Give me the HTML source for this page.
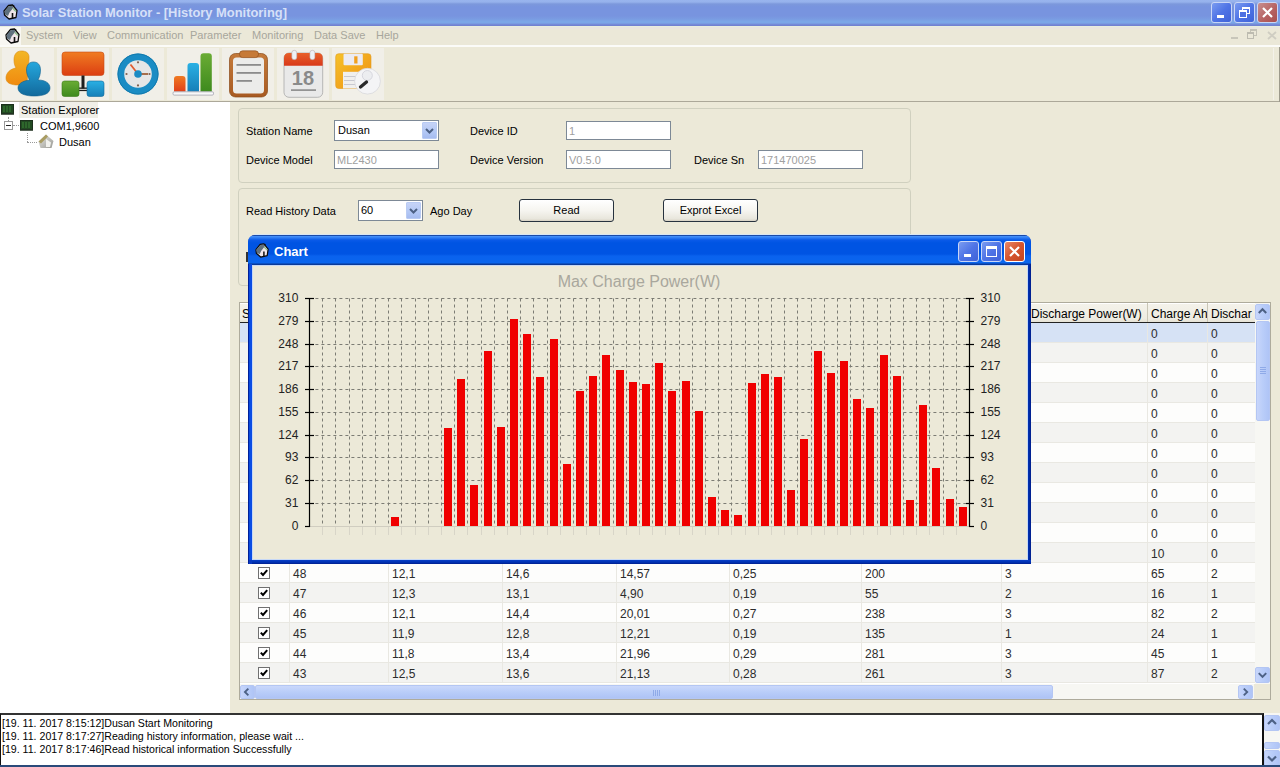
<!DOCTYPE html><html><head><meta charset="utf-8"><style>
*{margin:0;padding:0;box-sizing:border-box}
html,body{width:1280px;height:767px;overflow:hidden;background:#ece9d8;font-family:"Liberation Sans",sans-serif;font-size:11px;color:#000}
.a{position:absolute}
.t{position:absolute;white-space:nowrap;line-height:13px}
.tb{position:absolute;background:#fff;border:1px solid #7d8996}
.dis{color:#a0a0a0}
.btn{position:absolute;border:1px solid #27323e;border-radius:3px;background:linear-gradient(#fff 0%,#f6f5f0 50%,#e8e6dc 90%,#d6d0c2 100%);text-align:center;line-height:20px;font-size:11px}
.ddb{position:absolute;width:15px;border-radius:1px;background:linear-gradient(#c6d3f7,#b3c8f5 60%,#a6bcf0);border:1px solid #b9cbf3}
.sb{position:absolute;background:linear-gradient(90deg,#c8d6fb,#b9cdf9 50%,#afc4f6);border:1px solid #b4c6f3;border-radius:2px}
.gc{position:absolute;top:0;height:20px;border-right:1px solid #ecebe6}
</style></head><body>
<div class="a" style="left:0;top:0;width:1280px;height:26px;background:linear-gradient(#98b4ee 0px,#96b2ec 2px,#7c98dc 4px,#7894df 7px,#7894df 16px,#7a9ce2 19px,#7aa8e8 22px,#7aa4e6 23px,#7282d2 25px,#7080d0 26px)"></div>
<div class="a" style="left:0;top:26px;width:1280px;height:1px;background:#e6eede"></div>
<div class="a" style="left:0;top:27px;width:1280px;height:2px;background:#e9e6de"></div>
<svg class="a" style="left:3px;top:4px" width="16" height="16" viewBox="0 0 16 16"><path d="M1 7 L5.5 1.5 L9.5 1 L14 6.5 L13 13.5 L6 15 L1.5 11 Z" fill="#efe6ea" stroke="#0a0a0a" stroke-width="1.3" stroke-linejoin="round"/><path d="M1.6 7 L5.7 2.2 L9.3 1.8 L10.5 3.5 L6.5 8.5 L5 12 L2 10.5 Z" fill="#5f707e"/><path d="M10 3.5 L13.2 6.8 L12.5 8 L9.5 5 Z" fill="#8fbf8f"/><path d="M9.5 9 L9.5 14.5" stroke="#111" stroke-width="1.6"/><circle cx="10.5" cy="1.8" r="0.9" fill="#111"/></svg>
<div class="t" style="left:22px;top:6px;font-size:12.9px;font-weight:bold;color:#d6e0f8;letter-spacing:0px">Solar Station Monitor - [History Monitoring]</div>
<div class="a" style="left:1211px;top:2px;width:21px;height:21px;border:1px solid #c9d6f6;border-radius:3px;background:linear-gradient(135deg,#7a9bf0,#4f74e6 50%,#3f62d8)"><div class="a" style="left:5px;top:12px;width:7px;height:3px;background:#fff"></div></div>
<div class="a" style="left:1234px;top:2px;width:21px;height:21px;border:1px solid #c9d6f6;border-radius:3px;background:linear-gradient(135deg,#7a9bf0,#4f74e6 50%,#3f62d8)"><div class="a" style="left:7px;top:4px;width:8px;height:7px;border:1px solid #fff;border-top-width:2px"></div><div class="a" style="left:4px;top:7px;width:8px;height:8px;border:1px solid #fff;border-top-width:2px;background:#4d70e2"></div></div>
<div class="a" style="left:1257px;top:2px;width:21px;height:21px;border:1px solid #c9d6f6;border-radius:3px;background:linear-gradient(135deg,#c88f8f,#b56060 60%,#a85050)"><svg class="a" style="left:0;top:0" width="19" height="19"><path d="M5 5 L14 14 M14 5 L5 14" stroke="#fff" stroke-width="2.2"/></svg></div>
<div class="a" style="left:0;top:29px;width:1280px;height:16px;background:#ebe8d8"></div>
<div class="a" style="left:0;top:45px;width:1280px;height:2px;background:#fbfbf8"></div>
<div class="a" style="left:0;top:27px;width:21px;height:18px;background:#f8f7f2"></div>
<svg class="a" style="left:5px;top:28px" width="16" height="16" viewBox="0 0 16 16"><path d="M1 7 L5.5 1.5 L9.5 1 L14 6.5 L13 13.5 L6 15 L1.5 11 Z" fill="#efe6ea" stroke="#0a0a0a" stroke-width="1.3" stroke-linejoin="round"/><path d="M1.6 7 L5.7 2.2 L9.3 1.8 L10.5 3.5 L6.5 8.5 L5 12 L2 10.5 Z" fill="#5f707e"/><path d="M10 3.5 L13.2 6.8 L12.5 8 L9.5 5 Z" fill="#8fbf8f"/><path d="M9.5 9 L9.5 14.5" stroke="#111" stroke-width="1.6"/><circle cx="10.5" cy="1.8" r="0.9" fill="#111"/></svg>
<div class="t" style="left:26px;top:29px;font-size:11px;color:#a7a69c">System</div>
<div class="t" style="left:73px;top:29px;font-size:11px;color:#a7a69c">View</div>
<div class="t" style="left:107px;top:29px;font-size:11px;color:#a7a69c">Communication</div>
<div class="t" style="left:190px;top:29px;font-size:11px;color:#a7a69c">Parameter</div>
<div class="t" style="left:252px;top:29px;font-size:11px;color:#a7a69c">Monitoring</div>
<div class="t" style="left:314px;top:29px;font-size:11px;color:#a7a69c">Data Save</div>
<div class="t" style="left:376px;top:29px;font-size:11px;color:#a7a69c">Help</div>
<div class="a" style="left:1231px;top:37px;width:7px;height:2px;background:#c8c6ba"></div>
<div class="a" style="left:1250px;top:29px;width:7px;height:7px;border:1px solid #c4c2b6;border-top-width:2px"></div>
<div class="a" style="left:1247px;top:32px;width:7px;height:7px;border:1px solid #bdbbb0;border-top-width:2px;background:#ebe8d8"></div>
<svg class="a" style="left:1267px;top:31px" width="10" height="9"><path d="M1 1 L9 8 M9 1 L1 8" stroke="#cfcdc2" stroke-width="1.8"/></svg>
<div class="a" style="left:0;top:47px;width:1280px;height:54px;background:#ece9d8"></div>
<div class="a" style="left:0;top:101px;width:1280px;height:1px;background:#aca899"></div>
<div class="a" style="left:1279px;top:47px;width:1px;height:55px;background:#9d9a8c"></div>
<div class="a" style="left:1273px;top:48px;width:1px;height:52px;background:#f4f2ea"></div>
<div class="a" style="left:2px;top:48px;width:52px;height:52px;background:#f1efe8"></div>
<div class="a" style="left:57px;top:48px;width:52px;height:52px;background:#f1efe8"></div>
<div class="a" style="left:112px;top:48px;width:52px;height:52px;background:#f1efe8"></div>
<div class="a" style="left:167px;top:48px;width:52px;height:52px;background:#f1efe8"></div>
<div class="a" style="left:222px;top:48px;width:52px;height:52px;background:#f1efe8"></div>
<div class="a" style="left:277px;top:48px;width:52px;height:52px;background:#f1efe8"></div>
<div class="a" style="left:332px;top:48px;width:52px;height:52px;background:#f1efe8"></div>
<svg class="a" style="left:0;top:0" width="400" height="102" viewBox="0 0 400 102">
<defs>
<linearGradient id="gor" x1="0" y1="0" x2="0" y2="1"><stop offset="0" stop-color="#f3b624"/><stop offset="1" stop-color="#f08a10"/></linearGradient>
<linearGradient id="gbl" x1="0" y1="0" x2="0" y2="1"><stop offset="0" stop-color="#25a7dd"/><stop offset="1" stop-color="#12699c"/></linearGradient>
<linearGradient id="gnet" x1="0" y1="0" x2="0" y2="1"><stop offset="0" stop-color="#f07c22"/><stop offset="1" stop-color="#dc3e12"/></linearGradient>
<linearGradient id="ggr" x1="0" y1="0" x2="0" y2="1"><stop offset="0" stop-color="#6aac34"/><stop offset="1" stop-color="#3e8a1e"/></linearGradient>
<linearGradient id="gbx" x1="0" y1="0" x2="0" y2="1"><stop offset="0" stop-color="#2ab0e4"/><stop offset="1" stop-color="#167fb8"/></linearGradient>
<linearGradient id="gob" x1="0" y1="0" x2="0" y2="1"><stop offset="0" stop-color="#f07a22"/><stop offset="1" stop-color="#e0401a"/></linearGradient>
<linearGradient id="gcb" x1="0" y1="0" x2="0" y2="1"><stop offset="0" stop-color="#c47a3a"/><stop offset="1" stop-color="#a85a22"/></linearGradient>
<linearGradient id="gcal" x1="0" y1="0" x2="0" y2="1"><stop offset="0" stop-color="#e8602a"/><stop offset="1" stop-color="#d8381a"/></linearGradient>
<linearGradient id="gfl" x1="0" y1="0" x2="1" y2="1"><stop offset="0" stop-color="#f6c22a"/><stop offset="1" stop-color="#ee8e12"/></linearGradient>
</defs>
<!-- users -->
<path d="M21.5 51 C16 51 14 55 14 60 C14 64 15 66 16 68 C10 69 6 73 6 78 C6 83 11 85 18 85 L27 85 L28 66 C29 62 29 59 29 57 C29 53 26 51 21.5 51 Z" fill="url(#gor)" stroke="#d88a10" stroke-width="0.6"/>
<path d="M33.5 62 C29 62 26.5 65 26.5 70 C26.5 74 28 77 29.5 80 C22 81 18 84 18 88 C18 94 26 96 34 96 C43 96 50 94 50 88 C50 83 45 80 38 80 C39.5 77 40.5 74 40.5 70 C40.5 65 38 62 33.5 62 Z" fill="url(#gbl)" stroke="#0f5f8e" stroke-width="0.6"/>
<!-- network -->
<rect x="62" y="52" width="42" height="23.5" rx="3" fill="url(#gnet)" stroke="#c84a18" stroke-width="0.6"/>
<rect x="81.5" y="75.5" width="3" height="13" fill="#1e1e1e"/>
<rect x="78" y="87.5" width="10" height="1.3" fill="#1e1e1e"/><rect x="78" y="89.8" width="10" height="1.3" fill="#1e1e1e"/>
<rect x="62" y="81" width="17" height="15.5" rx="2.5" fill="url(#ggr)" stroke="#3a7a1a" stroke-width="0.6"/>
<rect x="87" y="81" width="17" height="15.5" rx="2.5" fill="url(#gbx)" stroke="#136a9a" stroke-width="0.6"/>
<!-- clock -->
<circle cx="138" cy="74" r="20.5" fill="#1a8cc4"/>
<circle cx="138" cy="74" r="20" fill="none" stroke="#137aad" stroke-width="1"/>
<circle cx="138" cy="74" r="13.8" fill="#e6e6e6"/>
<path d="M138 74 L130.5 64.5" stroke="#e05a30" stroke-width="1.8"/>
<path d="M138 74 L148 74" stroke="#a0603a" stroke-width="1.8"/>
<circle cx="138" cy="74" r="3.8" fill="#1c8bc4"/>
<circle cx="138" cy="62.3" r="1.1" fill="#806050"/><circle cx="138" cy="85.4" r="1.1" fill="#806050"/>
<circle cx="126.5" cy="74" r="1.1" fill="#806050"/><circle cx="149.5" cy="74" r="1.1" fill="#806050"/>
<!-- bars -->
<path d="M174 91.5 L174 79 Q174 76 177 76 L182.5 76 Q185.5 76 185.5 79 L185.5 91.5 Z" fill="url(#gob)"/>
<path d="M187.5 91.5 L187.5 66 Q187.5 63 190.5 63 L196 63 Q199 63 199 66 L199 91.5 Z" fill="url(#gbx)"/>
<path d="M200.5 91.5 L200.5 56.5 Q200.5 53.3 203.5 53.3 L208.8 53.3 Q211.8 53.3 211.8 56.5 L211.8 91.5 Z" fill="url(#ggr)"/>
<rect x="173" y="91.8" width="40.5" height="3.3" rx="1.2" fill="#f8f8f8" stroke="#9a9aa8" stroke-width="0.7"/>
<!-- clipboard -->
<rect x="229.5" y="53.5" width="38" height="43.5" rx="6" fill="url(#gcb)" stroke="#8a4a1a" stroke-width="0.7"/>
<rect x="233" y="57.5" width="31" height="36" rx="3.5" fill="#ececea"/>
<rect x="239.5" y="50.8" width="19" height="6.8" rx="3.2" fill="#c67a38" stroke="#8a4a1a" stroke-width="0.6"/>
<rect x="236.5" y="64" width="24.5" height="1.8" fill="#8c8c8c"/>
<rect x="236.5" y="72" width="24.5" height="1.8" fill="#8c8c8c"/>
<rect x="236.5" y="80" width="15.5" height="1.8" fill="#8c8c8c"/>
<!-- calendar -->
<rect x="284" y="53" width="38.7" height="44.3" rx="5" fill="#e9e9e9" stroke="#a8a8a8" stroke-width="0.8"/>
<path d="M284 65.8 L284 58 Q284 53 289 53 L317.7 53 Q322.7 53 322.7 58 L322.7 65.8 Z" fill="url(#gcal)"/>
<rect x="291.8" y="50.3" width="5" height="9.4" rx="2.5" fill="#eef0f6" stroke="#b0a0a0" stroke-width="0.5"/>
<rect x="309.9" y="50.3" width="5" height="9.4" rx="2.5" fill="#eef0f6" stroke="#b0a0a0" stroke-width="0.5"/>
<text x="302.9" y="85.1" text-anchor="middle" font-family="Liberation Sans" font-weight="bold" font-size="20" fill="#8a8a8a">18</text>
<rect x="291" y="89.3" width="25" height="1.6" fill="#8a8a8a"/>
<!-- floppy -->
<rect x="335.7" y="53.7" width="35.3" height="34.8" rx="3" fill="url(#gfl)" stroke="#e09a20" stroke-width="0.6"/>
<rect x="343.5" y="53.7" width="19.3" height="11.6" rx="1" fill="#ecebf2"/>
<rect x="354.2" y="56.3" width="3.3" height="7.2" fill="#f0a020"/>
<rect x="343" y="71.8" width="20" height="16.7" fill="#f0efee"/>
<rect x="344" y="76" width="14" height="1" fill="#c8c8d0"/><rect x="344" y="80" width="14" height="1" fill="#c8c8d0"/><rect x="344" y="84" width="14" height="1" fill="#c8c8d0"/>
<circle cx="367.5" cy="81.2" r="12.9" fill="#f4f4f6" stroke="#d8d8dc" stroke-width="0.8"/>
<circle cx="367.3" cy="75.5" r="5" fill="#ecedf0" stroke="#cfcfd8" stroke-width="0.8"/>
<path d="M360.5 87 L366.5 82" stroke="#2a2a2a" stroke-width="3.3" stroke-linecap="round"/>
</svg>
<div class="a" style="left:0;top:102px;width:230px;height:612px;background:#fff"></div>
<svg class="a" style="left:1px;top:104px" width="13" height="11" viewBox="0 0 13 11"><rect x="0" y="0" width="13" height="10.5" fill="#1c301c"/><rect x="1" y="1" width="11" height="8" fill="#224a22"/><path d="M2 3 H11 M2 5 H11 M2 7 H11" stroke="#3f8a3a" stroke-width="0.9" stroke-dasharray="2,1"/><rect x="0" y="9" width="13" height="1.5" fill="#223322"/></svg>
<div class="a" style="left:19px;top:102px;width:79px;height:16px;background:#f0efe8"></div>
<div class="t" style="left:21px;top:104px;font-size:11px">Station Explorer</div>
<div class="a" style="left:8px;top:117px;width:0;height:4px;border-left:1px dotted #999"></div>
<div class="a" style="left:4px;top:121px;width:9px;height:9px;border:1px solid #999;background:#fff"><div class="a" style="left:1px;top:3px;width:5px;height:1px;background:#222"></div></div>
<div class="a" style="left:13px;top:125px;width:6px;height:0;border-top:1px dotted #999"></div>
<svg class="a" style="left:20px;top:120px" width="13" height="11" viewBox="0 0 13 11"><rect x="0" y="0" width="13" height="10.5" fill="#1c301c"/><rect x="1" y="1" width="11" height="8" fill="#224a22"/><path d="M2 3 H11 M2 5 H11 M2 7 H11" stroke="#3f8a3a" stroke-width="0.9" stroke-dasharray="2,1"/><rect x="0" y="9" width="13" height="1.5" fill="#223322"/></svg>
<div class="t" style="left:40px;top:120px;font-size:11px">COM1,9600</div>
<div class="a" style="left:27px;top:133px;width:0;height:9px;border-left:1px dotted #999"></div>
<div class="a" style="left:27px;top:142px;width:10px;height:0;border-top:1px dotted #999"></div>
<svg class="a" style="left:37px;top:133px" width="18" height="16" viewBox="0 0 18 16"><defs><linearGradient id="hs" x1="0" y1="0" x2="1" y2="1"><stop offset="0" stop-color="#e8e8e4"/><stop offset="1" stop-color="#9a9a94"/></linearGradient></defs><path d="M1.5 8.5 L9 1.5 L16.5 8 L14.5 15 L3.5 15 Z" fill="url(#hs)"/><path d="M1.5 8.5 L9 1.5 L11 3.5 L4 10.5 Z" fill="#a99c62"/><path d="M9 6 L14 9.5 L13 14 L9 14 Z" fill="#f2f2ee"/></svg>
<div class="t" style="left:59px;top:136px;font-size:11px">Dusan</div>
<div class="a" style="left:238px;top:108px;width:673px;height:75px;border:1px solid #d0d0bf;border-radius:4px"></div>
<div class="a" style="left:238px;top:188px;width:673px;height:98px;border:1px solid #d0d0bf;border-radius:4px"></div>
<div class="t" style="left:246px;top:125px;font-size:11px">Station Name</div>
<div class="t" style="left:246px;top:154px;font-size:11px">Device Model</div>
<div class="t" style="left:470px;top:125px;font-size:11px">Device ID</div>
<div class="t" style="left:470px;top:154px;font-size:11px">Device Version</div>
<div class="t" style="left:694px;top:154px;font-size:11px">Device Sn</div>
<div class="t" style="left:246px;top:205px;font-size:11px">Read History Data</div>
<div class="t" style="left:430px;top:205px;font-size:11px">Ago Day</div>
<div class="tb" style="left:334px;top:120px;width:105px;height:21px"></div>
<div class="t" style="left:338px;top:124px;font-size:11px">Dusan</div>
<div class="ddb" style="left:422px;top:122px;height:17px"><svg class="a" style="left:2px;top:5px" width="9" height="7"><path d="M1 1 L4.5 4.5 L8 1" fill="none" stroke="#4d6185" stroke-width="2"/></svg></div>
<div class="tb" style="left:334px;top:150px;width:105px;height:19px"></div><div class="t dis" style="left:337px;top:154px;font-size:11px">ML2430</div>
<div class="tb" style="left:566px;top:121px;width:105px;height:19px"></div><div class="t dis" style="left:569px;top:125px;font-size:11px">1</div>
<div class="tb" style="left:566px;top:150px;width:105px;height:19px"></div><div class="t dis" style="left:569px;top:154px;font-size:11px">V0.5.0</div>
<div class="tb" style="left:758px;top:150px;width:105px;height:19px"></div><div class="t dis" style="left:761px;top:154px;font-size:11px">171470025</div>
<div class="tb" style="left:358px;top:200px;width:65px;height:21px"></div>
<div class="t" style="left:361px;top:204px;font-size:11px">60</div>
<div class="ddb" style="left:406px;top:202px;height:17px"><svg class="a" style="left:2px;top:5px" width="9" height="7"><path d="M1 1 L4.5 4.5 L8 1" fill="none" stroke="#4d6185" stroke-width="2"/></svg></div>
<div class="btn" style="left:519px;top:199px;width:95px;height:23px">Read</div>
<div class="btn" style="left:663px;top:199px;width:95px;height:23px">Exprot Excel</div>
<div class="a" style="left:246px;top:252px;width:2px;height:10px;background:#333"></div>
<div class="a" style="left:239px;top:302px;width:1032px;height:398px;background:#fff;border:1px solid #aeab9c"></div>
<div class="a" style="left:240px;top:304px;width:1015px;height:18px;background:linear-gradient(#f4f2ea,#eeece2 80%,#e6e3d6)"></div>
<div class="a" style="left:240px;top:322px;width:1015px;height:1px;background:#222"></div>
<div class="a" style="left:289px;top:303px;width:1px;height:19px;background:#c9c6b6"></div>
<div class="a" style="left:388px;top:303px;width:1px;height:19px;background:#c9c6b6"></div>
<div class="a" style="left:502px;top:303px;width:1px;height:19px;background:#c9c6b6"></div>
<div class="a" style="left:616px;top:303px;width:1px;height:19px;background:#c9c6b6"></div>
<div class="a" style="left:729px;top:303px;width:1px;height:19px;background:#c9c6b6"></div>
<div class="a" style="left:861px;top:303px;width:1px;height:19px;background:#c9c6b6"></div>
<div class="a" style="left:1001px;top:303px;width:1px;height:19px;background:#c9c6b6"></div>
<div class="a" style="left:1147px;top:303px;width:1px;height:19px;background:#c9c6b6"></div>
<div class="a" style="left:1207px;top:303px;width:1px;height:19px;background:#c9c6b6"></div>
<div class="t" style="left:242px;top:308px;font-size:12px">S</div>
<div class="t" style="left:1005px;top:308px;font-size:12px">Max Discharge Power(W)</div>
<div class="a" style="left:1147px;top:304px;width:60px;height:18px;overflow:hidden"><div class="t" style="left:4px;top:4px;font-size:12px">Charge Ah</div></div>
<div class="a" style="left:1207px;top:304px;width:47px;height:18px;overflow:hidden"><div class="t" style="left:4px;top:4px;font-size:12px">Dischar</div></div>
<div class="a" style="left:240px;top:323px;width:1015px;height:20px;background:#d6e2f5;border-bottom:1px solid #e9e8e2"></div>
<div class="a" style="left:289px;top:323px;width:1px;height:20px;background:#e9e8e2"></div>
<div class="a" style="left:388px;top:323px;width:1px;height:20px;background:#e9e8e2"></div>
<div class="a" style="left:502px;top:323px;width:1px;height:20px;background:#e9e8e2"></div>
<div class="a" style="left:616px;top:323px;width:1px;height:20px;background:#e9e8e2"></div>
<div class="a" style="left:729px;top:323px;width:1px;height:20px;background:#e9e8e2"></div>
<div class="a" style="left:861px;top:323px;width:1px;height:20px;background:#e9e8e2"></div>
<div class="a" style="left:1001px;top:323px;width:1px;height:20px;background:#e9e8e2"></div>
<div class="a" style="left:1147px;top:323px;width:1px;height:20px;background:#e9e8e2"></div>
<div class="a" style="left:1207px;top:323px;width:1px;height:20px;background:#e9e8e2"></div>
<div class="t" style="left:1151px;top:328px;font-size:12px;color:#2c2c2c">0</div>
<div class="t" style="left:1211px;top:328px;font-size:12px;color:#2c2c2c">0</div>
<div class="a" style="left:240px;top:343px;width:1015px;height:20px;background:#f3f3f1;border-bottom:1px solid #e9e8e2"></div>
<div class="a" style="left:289px;top:343px;width:1px;height:20px;background:#e9e8e2"></div>
<div class="a" style="left:388px;top:343px;width:1px;height:20px;background:#e9e8e2"></div>
<div class="a" style="left:502px;top:343px;width:1px;height:20px;background:#e9e8e2"></div>
<div class="a" style="left:616px;top:343px;width:1px;height:20px;background:#e9e8e2"></div>
<div class="a" style="left:729px;top:343px;width:1px;height:20px;background:#e9e8e2"></div>
<div class="a" style="left:861px;top:343px;width:1px;height:20px;background:#e9e8e2"></div>
<div class="a" style="left:1001px;top:343px;width:1px;height:20px;background:#e9e8e2"></div>
<div class="a" style="left:1147px;top:343px;width:1px;height:20px;background:#e9e8e2"></div>
<div class="a" style="left:1207px;top:343px;width:1px;height:20px;background:#e9e8e2"></div>
<div class="t" style="left:1151px;top:348px;font-size:12px;color:#2c2c2c">0</div>
<div class="t" style="left:1211px;top:348px;font-size:12px;color:#2c2c2c">0</div>
<div class="a" style="left:240px;top:363px;width:1015px;height:20px;background:#fdfdfc;border-bottom:1px solid #e9e8e2"></div>
<div class="a" style="left:289px;top:363px;width:1px;height:20px;background:#e9e8e2"></div>
<div class="a" style="left:388px;top:363px;width:1px;height:20px;background:#e9e8e2"></div>
<div class="a" style="left:502px;top:363px;width:1px;height:20px;background:#e9e8e2"></div>
<div class="a" style="left:616px;top:363px;width:1px;height:20px;background:#e9e8e2"></div>
<div class="a" style="left:729px;top:363px;width:1px;height:20px;background:#e9e8e2"></div>
<div class="a" style="left:861px;top:363px;width:1px;height:20px;background:#e9e8e2"></div>
<div class="a" style="left:1001px;top:363px;width:1px;height:20px;background:#e9e8e2"></div>
<div class="a" style="left:1147px;top:363px;width:1px;height:20px;background:#e9e8e2"></div>
<div class="a" style="left:1207px;top:363px;width:1px;height:20px;background:#e9e8e2"></div>
<div class="t" style="left:1151px;top:368px;font-size:12px;color:#2c2c2c">0</div>
<div class="t" style="left:1211px;top:368px;font-size:12px;color:#2c2c2c">0</div>
<div class="a" style="left:240px;top:383px;width:1015px;height:20px;background:#f3f3f1;border-bottom:1px solid #e9e8e2"></div>
<div class="a" style="left:289px;top:383px;width:1px;height:20px;background:#e9e8e2"></div>
<div class="a" style="left:388px;top:383px;width:1px;height:20px;background:#e9e8e2"></div>
<div class="a" style="left:502px;top:383px;width:1px;height:20px;background:#e9e8e2"></div>
<div class="a" style="left:616px;top:383px;width:1px;height:20px;background:#e9e8e2"></div>
<div class="a" style="left:729px;top:383px;width:1px;height:20px;background:#e9e8e2"></div>
<div class="a" style="left:861px;top:383px;width:1px;height:20px;background:#e9e8e2"></div>
<div class="a" style="left:1001px;top:383px;width:1px;height:20px;background:#e9e8e2"></div>
<div class="a" style="left:1147px;top:383px;width:1px;height:20px;background:#e9e8e2"></div>
<div class="a" style="left:1207px;top:383px;width:1px;height:20px;background:#e9e8e2"></div>
<div class="t" style="left:1151px;top:388px;font-size:12px;color:#2c2c2c">0</div>
<div class="t" style="left:1211px;top:388px;font-size:12px;color:#2c2c2c">0</div>
<div class="a" style="left:240px;top:403px;width:1015px;height:20px;background:#fdfdfc;border-bottom:1px solid #e9e8e2"></div>
<div class="a" style="left:289px;top:403px;width:1px;height:20px;background:#e9e8e2"></div>
<div class="a" style="left:388px;top:403px;width:1px;height:20px;background:#e9e8e2"></div>
<div class="a" style="left:502px;top:403px;width:1px;height:20px;background:#e9e8e2"></div>
<div class="a" style="left:616px;top:403px;width:1px;height:20px;background:#e9e8e2"></div>
<div class="a" style="left:729px;top:403px;width:1px;height:20px;background:#e9e8e2"></div>
<div class="a" style="left:861px;top:403px;width:1px;height:20px;background:#e9e8e2"></div>
<div class="a" style="left:1001px;top:403px;width:1px;height:20px;background:#e9e8e2"></div>
<div class="a" style="left:1147px;top:403px;width:1px;height:20px;background:#e9e8e2"></div>
<div class="a" style="left:1207px;top:403px;width:1px;height:20px;background:#e9e8e2"></div>
<div class="t" style="left:1151px;top:408px;font-size:12px;color:#2c2c2c">0</div>
<div class="t" style="left:1211px;top:408px;font-size:12px;color:#2c2c2c">0</div>
<div class="a" style="left:240px;top:423px;width:1015px;height:20px;background:#f3f3f1;border-bottom:1px solid #e9e8e2"></div>
<div class="a" style="left:289px;top:423px;width:1px;height:20px;background:#e9e8e2"></div>
<div class="a" style="left:388px;top:423px;width:1px;height:20px;background:#e9e8e2"></div>
<div class="a" style="left:502px;top:423px;width:1px;height:20px;background:#e9e8e2"></div>
<div class="a" style="left:616px;top:423px;width:1px;height:20px;background:#e9e8e2"></div>
<div class="a" style="left:729px;top:423px;width:1px;height:20px;background:#e9e8e2"></div>
<div class="a" style="left:861px;top:423px;width:1px;height:20px;background:#e9e8e2"></div>
<div class="a" style="left:1001px;top:423px;width:1px;height:20px;background:#e9e8e2"></div>
<div class="a" style="left:1147px;top:423px;width:1px;height:20px;background:#e9e8e2"></div>
<div class="a" style="left:1207px;top:423px;width:1px;height:20px;background:#e9e8e2"></div>
<div class="t" style="left:1151px;top:428px;font-size:12px;color:#2c2c2c">0</div>
<div class="t" style="left:1211px;top:428px;font-size:12px;color:#2c2c2c">0</div>
<div class="a" style="left:240px;top:443px;width:1015px;height:20px;background:#fdfdfc;border-bottom:1px solid #e9e8e2"></div>
<div class="a" style="left:289px;top:443px;width:1px;height:20px;background:#e9e8e2"></div>
<div class="a" style="left:388px;top:443px;width:1px;height:20px;background:#e9e8e2"></div>
<div class="a" style="left:502px;top:443px;width:1px;height:20px;background:#e9e8e2"></div>
<div class="a" style="left:616px;top:443px;width:1px;height:20px;background:#e9e8e2"></div>
<div class="a" style="left:729px;top:443px;width:1px;height:20px;background:#e9e8e2"></div>
<div class="a" style="left:861px;top:443px;width:1px;height:20px;background:#e9e8e2"></div>
<div class="a" style="left:1001px;top:443px;width:1px;height:20px;background:#e9e8e2"></div>
<div class="a" style="left:1147px;top:443px;width:1px;height:20px;background:#e9e8e2"></div>
<div class="a" style="left:1207px;top:443px;width:1px;height:20px;background:#e9e8e2"></div>
<div class="t" style="left:1151px;top:448px;font-size:12px;color:#2c2c2c">0</div>
<div class="t" style="left:1211px;top:448px;font-size:12px;color:#2c2c2c">0</div>
<div class="a" style="left:240px;top:463px;width:1015px;height:20px;background:#f3f3f1;border-bottom:1px solid #e9e8e2"></div>
<div class="a" style="left:289px;top:463px;width:1px;height:20px;background:#e9e8e2"></div>
<div class="a" style="left:388px;top:463px;width:1px;height:20px;background:#e9e8e2"></div>
<div class="a" style="left:502px;top:463px;width:1px;height:20px;background:#e9e8e2"></div>
<div class="a" style="left:616px;top:463px;width:1px;height:20px;background:#e9e8e2"></div>
<div class="a" style="left:729px;top:463px;width:1px;height:20px;background:#e9e8e2"></div>
<div class="a" style="left:861px;top:463px;width:1px;height:20px;background:#e9e8e2"></div>
<div class="a" style="left:1001px;top:463px;width:1px;height:20px;background:#e9e8e2"></div>
<div class="a" style="left:1147px;top:463px;width:1px;height:20px;background:#e9e8e2"></div>
<div class="a" style="left:1207px;top:463px;width:1px;height:20px;background:#e9e8e2"></div>
<div class="t" style="left:1151px;top:468px;font-size:12px;color:#2c2c2c">0</div>
<div class="t" style="left:1211px;top:468px;font-size:12px;color:#2c2c2c">0</div>
<div class="a" style="left:240px;top:483px;width:1015px;height:20px;background:#fdfdfc;border-bottom:1px solid #e9e8e2"></div>
<div class="a" style="left:289px;top:483px;width:1px;height:20px;background:#e9e8e2"></div>
<div class="a" style="left:388px;top:483px;width:1px;height:20px;background:#e9e8e2"></div>
<div class="a" style="left:502px;top:483px;width:1px;height:20px;background:#e9e8e2"></div>
<div class="a" style="left:616px;top:483px;width:1px;height:20px;background:#e9e8e2"></div>
<div class="a" style="left:729px;top:483px;width:1px;height:20px;background:#e9e8e2"></div>
<div class="a" style="left:861px;top:483px;width:1px;height:20px;background:#e9e8e2"></div>
<div class="a" style="left:1001px;top:483px;width:1px;height:20px;background:#e9e8e2"></div>
<div class="a" style="left:1147px;top:483px;width:1px;height:20px;background:#e9e8e2"></div>
<div class="a" style="left:1207px;top:483px;width:1px;height:20px;background:#e9e8e2"></div>
<div class="t" style="left:1151px;top:488px;font-size:12px;color:#2c2c2c">0</div>
<div class="t" style="left:1211px;top:488px;font-size:12px;color:#2c2c2c">0</div>
<div class="a" style="left:240px;top:503px;width:1015px;height:20px;background:#f3f3f1;border-bottom:1px solid #e9e8e2"></div>
<div class="a" style="left:289px;top:503px;width:1px;height:20px;background:#e9e8e2"></div>
<div class="a" style="left:388px;top:503px;width:1px;height:20px;background:#e9e8e2"></div>
<div class="a" style="left:502px;top:503px;width:1px;height:20px;background:#e9e8e2"></div>
<div class="a" style="left:616px;top:503px;width:1px;height:20px;background:#e9e8e2"></div>
<div class="a" style="left:729px;top:503px;width:1px;height:20px;background:#e9e8e2"></div>
<div class="a" style="left:861px;top:503px;width:1px;height:20px;background:#e9e8e2"></div>
<div class="a" style="left:1001px;top:503px;width:1px;height:20px;background:#e9e8e2"></div>
<div class="a" style="left:1147px;top:503px;width:1px;height:20px;background:#e9e8e2"></div>
<div class="a" style="left:1207px;top:503px;width:1px;height:20px;background:#e9e8e2"></div>
<div class="t" style="left:1151px;top:508px;font-size:12px;color:#2c2c2c">0</div>
<div class="t" style="left:1211px;top:508px;font-size:12px;color:#2c2c2c">0</div>
<div class="a" style="left:240px;top:523px;width:1015px;height:20px;background:#fdfdfc;border-bottom:1px solid #e9e8e2"></div>
<div class="a" style="left:289px;top:523px;width:1px;height:20px;background:#e9e8e2"></div>
<div class="a" style="left:388px;top:523px;width:1px;height:20px;background:#e9e8e2"></div>
<div class="a" style="left:502px;top:523px;width:1px;height:20px;background:#e9e8e2"></div>
<div class="a" style="left:616px;top:523px;width:1px;height:20px;background:#e9e8e2"></div>
<div class="a" style="left:729px;top:523px;width:1px;height:20px;background:#e9e8e2"></div>
<div class="a" style="left:861px;top:523px;width:1px;height:20px;background:#e9e8e2"></div>
<div class="a" style="left:1001px;top:523px;width:1px;height:20px;background:#e9e8e2"></div>
<div class="a" style="left:1147px;top:523px;width:1px;height:20px;background:#e9e8e2"></div>
<div class="a" style="left:1207px;top:523px;width:1px;height:20px;background:#e9e8e2"></div>
<div class="t" style="left:1151px;top:528px;font-size:12px;color:#2c2c2c">0</div>
<div class="t" style="left:1211px;top:528px;font-size:12px;color:#2c2c2c">0</div>
<div class="a" style="left:240px;top:543px;width:1015px;height:20px;background:#f3f3f1;border-bottom:1px solid #e9e8e2"></div>
<div class="a" style="left:289px;top:543px;width:1px;height:20px;background:#e9e8e2"></div>
<div class="a" style="left:388px;top:543px;width:1px;height:20px;background:#e9e8e2"></div>
<div class="a" style="left:502px;top:543px;width:1px;height:20px;background:#e9e8e2"></div>
<div class="a" style="left:616px;top:543px;width:1px;height:20px;background:#e9e8e2"></div>
<div class="a" style="left:729px;top:543px;width:1px;height:20px;background:#e9e8e2"></div>
<div class="a" style="left:861px;top:543px;width:1px;height:20px;background:#e9e8e2"></div>
<div class="a" style="left:1001px;top:543px;width:1px;height:20px;background:#e9e8e2"></div>
<div class="a" style="left:1147px;top:543px;width:1px;height:20px;background:#e9e8e2"></div>
<div class="a" style="left:1207px;top:543px;width:1px;height:20px;background:#e9e8e2"></div>
<div class="t" style="left:1151px;top:548px;font-size:12px;color:#2c2c2c">10</div>
<div class="t" style="left:1211px;top:548px;font-size:12px;color:#2c2c2c">0</div>
<div class="a" style="left:240px;top:563px;width:1015px;height:20px;background:#fdfdfc;border-bottom:1px solid #e9e8e2"></div>
<div class="a" style="left:289px;top:563px;width:1px;height:20px;background:#e9e8e2"></div>
<div class="a" style="left:388px;top:563px;width:1px;height:20px;background:#e9e8e2"></div>
<div class="a" style="left:502px;top:563px;width:1px;height:20px;background:#e9e8e2"></div>
<div class="a" style="left:616px;top:563px;width:1px;height:20px;background:#e9e8e2"></div>
<div class="a" style="left:729px;top:563px;width:1px;height:20px;background:#e9e8e2"></div>
<div class="a" style="left:861px;top:563px;width:1px;height:20px;background:#e9e8e2"></div>
<div class="a" style="left:1001px;top:563px;width:1px;height:20px;background:#e9e8e2"></div>
<div class="a" style="left:1147px;top:563px;width:1px;height:20px;background:#e9e8e2"></div>
<div class="a" style="left:1207px;top:563px;width:1px;height:20px;background:#e9e8e2"></div>
<div class="a" style="left:258px;top:567px;width:12px;height:12px;border:1px solid #707070;background:#fff"><svg class="a" style="left:0;top:0" width="10" height="10"><path d="M1.8 4.6 L4 7 L8.2 2.2" fill="none" stroke="#000" stroke-width="2"/></svg></div>
<div class="t" style="left:293px;top:568px;font-size:12px;color:#2c2c2c">48</div>
<div class="t" style="left:392px;top:568px;font-size:12px;color:#2c2c2c">12,1</div>
<div class="t" style="left:506px;top:568px;font-size:12px;color:#2c2c2c">14,6</div>
<div class="t" style="left:620px;top:568px;font-size:12px;color:#2c2c2c">14,57</div>
<div class="t" style="left:733px;top:568px;font-size:12px;color:#2c2c2c">0,25</div>
<div class="t" style="left:865px;top:568px;font-size:12px;color:#2c2c2c">200</div>
<div class="t" style="left:1005px;top:568px;font-size:12px;color:#2c2c2c">3</div>
<div class="t" style="left:1151px;top:568px;font-size:12px;color:#2c2c2c">65</div>
<div class="t" style="left:1211px;top:568px;font-size:12px;color:#2c2c2c">2</div>
<div class="a" style="left:240px;top:583px;width:1015px;height:20px;background:#f3f3f1;border-bottom:1px solid #e9e8e2"></div>
<div class="a" style="left:289px;top:583px;width:1px;height:20px;background:#e9e8e2"></div>
<div class="a" style="left:388px;top:583px;width:1px;height:20px;background:#e9e8e2"></div>
<div class="a" style="left:502px;top:583px;width:1px;height:20px;background:#e9e8e2"></div>
<div class="a" style="left:616px;top:583px;width:1px;height:20px;background:#e9e8e2"></div>
<div class="a" style="left:729px;top:583px;width:1px;height:20px;background:#e9e8e2"></div>
<div class="a" style="left:861px;top:583px;width:1px;height:20px;background:#e9e8e2"></div>
<div class="a" style="left:1001px;top:583px;width:1px;height:20px;background:#e9e8e2"></div>
<div class="a" style="left:1147px;top:583px;width:1px;height:20px;background:#e9e8e2"></div>
<div class="a" style="left:1207px;top:583px;width:1px;height:20px;background:#e9e8e2"></div>
<div class="a" style="left:258px;top:587px;width:12px;height:12px;border:1px solid #707070;background:#fff"><svg class="a" style="left:0;top:0" width="10" height="10"><path d="M1.8 4.6 L4 7 L8.2 2.2" fill="none" stroke="#000" stroke-width="2"/></svg></div>
<div class="t" style="left:293px;top:588px;font-size:12px;color:#2c2c2c">47</div>
<div class="t" style="left:392px;top:588px;font-size:12px;color:#2c2c2c">12,3</div>
<div class="t" style="left:506px;top:588px;font-size:12px;color:#2c2c2c">13,1</div>
<div class="t" style="left:620px;top:588px;font-size:12px;color:#2c2c2c">4,90</div>
<div class="t" style="left:733px;top:588px;font-size:12px;color:#2c2c2c">0,19</div>
<div class="t" style="left:865px;top:588px;font-size:12px;color:#2c2c2c">55</div>
<div class="t" style="left:1005px;top:588px;font-size:12px;color:#2c2c2c">2</div>
<div class="t" style="left:1151px;top:588px;font-size:12px;color:#2c2c2c">16</div>
<div class="t" style="left:1211px;top:588px;font-size:12px;color:#2c2c2c">1</div>
<div class="a" style="left:240px;top:603px;width:1015px;height:20px;background:#fdfdfc;border-bottom:1px solid #e9e8e2"></div>
<div class="a" style="left:289px;top:603px;width:1px;height:20px;background:#e9e8e2"></div>
<div class="a" style="left:388px;top:603px;width:1px;height:20px;background:#e9e8e2"></div>
<div class="a" style="left:502px;top:603px;width:1px;height:20px;background:#e9e8e2"></div>
<div class="a" style="left:616px;top:603px;width:1px;height:20px;background:#e9e8e2"></div>
<div class="a" style="left:729px;top:603px;width:1px;height:20px;background:#e9e8e2"></div>
<div class="a" style="left:861px;top:603px;width:1px;height:20px;background:#e9e8e2"></div>
<div class="a" style="left:1001px;top:603px;width:1px;height:20px;background:#e9e8e2"></div>
<div class="a" style="left:1147px;top:603px;width:1px;height:20px;background:#e9e8e2"></div>
<div class="a" style="left:1207px;top:603px;width:1px;height:20px;background:#e9e8e2"></div>
<div class="a" style="left:258px;top:607px;width:12px;height:12px;border:1px solid #707070;background:#fff"><svg class="a" style="left:0;top:0" width="10" height="10"><path d="M1.8 4.6 L4 7 L8.2 2.2" fill="none" stroke="#000" stroke-width="2"/></svg></div>
<div class="t" style="left:293px;top:608px;font-size:12px;color:#2c2c2c">46</div>
<div class="t" style="left:392px;top:608px;font-size:12px;color:#2c2c2c">12,1</div>
<div class="t" style="left:506px;top:608px;font-size:12px;color:#2c2c2c">14,4</div>
<div class="t" style="left:620px;top:608px;font-size:12px;color:#2c2c2c">20,01</div>
<div class="t" style="left:733px;top:608px;font-size:12px;color:#2c2c2c">0,27</div>
<div class="t" style="left:865px;top:608px;font-size:12px;color:#2c2c2c">238</div>
<div class="t" style="left:1005px;top:608px;font-size:12px;color:#2c2c2c">3</div>
<div class="t" style="left:1151px;top:608px;font-size:12px;color:#2c2c2c">82</div>
<div class="t" style="left:1211px;top:608px;font-size:12px;color:#2c2c2c">2</div>
<div class="a" style="left:240px;top:623px;width:1015px;height:20px;background:#f3f3f1;border-bottom:1px solid #e9e8e2"></div>
<div class="a" style="left:289px;top:623px;width:1px;height:20px;background:#e9e8e2"></div>
<div class="a" style="left:388px;top:623px;width:1px;height:20px;background:#e9e8e2"></div>
<div class="a" style="left:502px;top:623px;width:1px;height:20px;background:#e9e8e2"></div>
<div class="a" style="left:616px;top:623px;width:1px;height:20px;background:#e9e8e2"></div>
<div class="a" style="left:729px;top:623px;width:1px;height:20px;background:#e9e8e2"></div>
<div class="a" style="left:861px;top:623px;width:1px;height:20px;background:#e9e8e2"></div>
<div class="a" style="left:1001px;top:623px;width:1px;height:20px;background:#e9e8e2"></div>
<div class="a" style="left:1147px;top:623px;width:1px;height:20px;background:#e9e8e2"></div>
<div class="a" style="left:1207px;top:623px;width:1px;height:20px;background:#e9e8e2"></div>
<div class="a" style="left:258px;top:627px;width:12px;height:12px;border:1px solid #707070;background:#fff"><svg class="a" style="left:0;top:0" width="10" height="10"><path d="M1.8 4.6 L4 7 L8.2 2.2" fill="none" stroke="#000" stroke-width="2"/></svg></div>
<div class="t" style="left:293px;top:628px;font-size:12px;color:#2c2c2c">45</div>
<div class="t" style="left:392px;top:628px;font-size:12px;color:#2c2c2c">11,9</div>
<div class="t" style="left:506px;top:628px;font-size:12px;color:#2c2c2c">12,8</div>
<div class="t" style="left:620px;top:628px;font-size:12px;color:#2c2c2c">12,21</div>
<div class="t" style="left:733px;top:628px;font-size:12px;color:#2c2c2c">0,19</div>
<div class="t" style="left:865px;top:628px;font-size:12px;color:#2c2c2c">135</div>
<div class="t" style="left:1005px;top:628px;font-size:12px;color:#2c2c2c">1</div>
<div class="t" style="left:1151px;top:628px;font-size:12px;color:#2c2c2c">24</div>
<div class="t" style="left:1211px;top:628px;font-size:12px;color:#2c2c2c">1</div>
<div class="a" style="left:240px;top:643px;width:1015px;height:20px;background:#fdfdfc;border-bottom:1px solid #e9e8e2"></div>
<div class="a" style="left:289px;top:643px;width:1px;height:20px;background:#e9e8e2"></div>
<div class="a" style="left:388px;top:643px;width:1px;height:20px;background:#e9e8e2"></div>
<div class="a" style="left:502px;top:643px;width:1px;height:20px;background:#e9e8e2"></div>
<div class="a" style="left:616px;top:643px;width:1px;height:20px;background:#e9e8e2"></div>
<div class="a" style="left:729px;top:643px;width:1px;height:20px;background:#e9e8e2"></div>
<div class="a" style="left:861px;top:643px;width:1px;height:20px;background:#e9e8e2"></div>
<div class="a" style="left:1001px;top:643px;width:1px;height:20px;background:#e9e8e2"></div>
<div class="a" style="left:1147px;top:643px;width:1px;height:20px;background:#e9e8e2"></div>
<div class="a" style="left:1207px;top:643px;width:1px;height:20px;background:#e9e8e2"></div>
<div class="a" style="left:258px;top:647px;width:12px;height:12px;border:1px solid #707070;background:#fff"><svg class="a" style="left:0;top:0" width="10" height="10"><path d="M1.8 4.6 L4 7 L8.2 2.2" fill="none" stroke="#000" stroke-width="2"/></svg></div>
<div class="t" style="left:293px;top:648px;font-size:12px;color:#2c2c2c">44</div>
<div class="t" style="left:392px;top:648px;font-size:12px;color:#2c2c2c">11,8</div>
<div class="t" style="left:506px;top:648px;font-size:12px;color:#2c2c2c">13,4</div>
<div class="t" style="left:620px;top:648px;font-size:12px;color:#2c2c2c">21,96</div>
<div class="t" style="left:733px;top:648px;font-size:12px;color:#2c2c2c">0,29</div>
<div class="t" style="left:865px;top:648px;font-size:12px;color:#2c2c2c">281</div>
<div class="t" style="left:1005px;top:648px;font-size:12px;color:#2c2c2c">3</div>
<div class="t" style="left:1151px;top:648px;font-size:12px;color:#2c2c2c">45</div>
<div class="t" style="left:1211px;top:648px;font-size:12px;color:#2c2c2c">1</div>
<div class="a" style="left:240px;top:663px;width:1015px;height:20px;background:#f3f3f1;border-bottom:1px solid #e9e8e2"></div>
<div class="a" style="left:289px;top:663px;width:1px;height:20px;background:#e9e8e2"></div>
<div class="a" style="left:388px;top:663px;width:1px;height:20px;background:#e9e8e2"></div>
<div class="a" style="left:502px;top:663px;width:1px;height:20px;background:#e9e8e2"></div>
<div class="a" style="left:616px;top:663px;width:1px;height:20px;background:#e9e8e2"></div>
<div class="a" style="left:729px;top:663px;width:1px;height:20px;background:#e9e8e2"></div>
<div class="a" style="left:861px;top:663px;width:1px;height:20px;background:#e9e8e2"></div>
<div class="a" style="left:1001px;top:663px;width:1px;height:20px;background:#e9e8e2"></div>
<div class="a" style="left:1147px;top:663px;width:1px;height:20px;background:#e9e8e2"></div>
<div class="a" style="left:1207px;top:663px;width:1px;height:20px;background:#e9e8e2"></div>
<div class="a" style="left:258px;top:667px;width:12px;height:12px;border:1px solid #707070;background:#fff"><svg class="a" style="left:0;top:0" width="10" height="10"><path d="M1.8 4.6 L4 7 L8.2 2.2" fill="none" stroke="#000" stroke-width="2"/></svg></div>
<div class="t" style="left:293px;top:668px;font-size:12px;color:#2c2c2c">43</div>
<div class="t" style="left:392px;top:668px;font-size:12px;color:#2c2c2c">12,5</div>
<div class="t" style="left:506px;top:668px;font-size:12px;color:#2c2c2c">13,6</div>
<div class="t" style="left:620px;top:668px;font-size:12px;color:#2c2c2c">21,13</div>
<div class="t" style="left:733px;top:668px;font-size:12px;color:#2c2c2c">0,28</div>
<div class="t" style="left:865px;top:668px;font-size:12px;color:#2c2c2c">261</div>
<div class="t" style="left:1005px;top:668px;font-size:12px;color:#2c2c2c">3</div>
<div class="t" style="left:1151px;top:668px;font-size:12px;color:#2c2c2c">87</div>
<div class="t" style="left:1211px;top:668px;font-size:12px;color:#2c2c2c">2</div>
<div class="a" style="left:1255px;top:303px;width:15px;height:381px;background:#f7f7f3"></div>
<div class="sb" style="left:1255px;top:304px;width:15px;height:16px"><svg class="a" style="left:0;top:0" width="13" height="14" viewBox="0 0 14 14"><path d="M3 8 L7 4 L11 8" fill="none" stroke="#4d6185" stroke-width="2.2"/></svg></div>
<div class="sb" style="left:1256px;top:321px;width:14px;height:100px"><div class="a" style="left:3px;top:45px;width:6px;height:1px;background:#8faae8;box-shadow:0 2px 0 #8faae8,0 4px 0 #8faae8,0 6px 0 #8faae8"></div></div>
<div class="sb" style="left:1255px;top:667px;width:15px;height:16px"><svg class="a" style="left:0;top:0" width="13" height="14" viewBox="0 0 14 14"><path d="M3 5 L7 9 L11 5" fill="none" stroke="#4d6185" stroke-width="2.2"/></svg></div>
<div class="a" style="left:240px;top:684px;width:1015px;height:15px;background:#f7f7f3"></div>
<div class="sb" style="left:240px;top:685px;width:15px;height:14px"><svg class="a" style="left:0;top:0" width="13" height="12" viewBox="0 0 14 14"><path d="M8 3 L4 7 L8 11" fill="none" stroke="#4d6185" stroke-width="2.2"/></svg></div>
<div class="sb" style="left:255px;top:685px;width:798px;height:14px;background:linear-gradient(#cad8fb,#b9cdf9 50%,#aec3f5)"><div class="a" style="left:397px;top:4px;width:1px;height:6px;background:#8faae8;box-shadow:2px 0 0 #8faae8,4px 0 0 #8faae8,6px 0 0 #8faae8"></div></div>
<div class="sb" style="left:1238px;top:685px;width:15px;height:14px"><svg class="a" style="left:0;top:0" width="13" height="12" viewBox="0 0 14 14"><path d="M5 3 L9 7 L5 11" fill="none" stroke="#4d6185" stroke-width="2.2"/></svg></div>
<div class="a" style="left:1254px;top:684px;width:16px;height:15px;background:#ece9d8"></div>
<div class="a" style="left:0;top:713px;width:1264px;height:53px;background:#fff;border:1px solid #111;border-top-width:2px;border-right-width:2px;border-top-color:#333"></div>
<div class="t" style="left:2px;top:717px;font-size:10.6px">[19. 11. 2017 8:15:12]Dusan Start Monitoring</div>
<div class="t" style="left:2px;top:730px;font-size:10.6px">[19. 11. 2017 8:17:27]Reading history information, please wait ...</div>
<div class="t" style="left:2px;top:743px;font-size:10.6px">[19. 11. 2017 8:17:46]Read historical information Successfully</div>
<div class="a" style="left:1264px;top:713px;width:16px;height:54px;background:#f7f7f3"></div>
<div class="sb" style="left:1264px;top:715px;width:16px;height:16px"><svg class="a" style="left:0;top:0" width="14" height="14" viewBox="0 0 14 14"><path d="M3 8 L7 4 L11 8" fill="none" stroke="#4d6185" stroke-width="2.2"/></svg></div>
<div class="sb" style="left:1264px;top:742px;width:16px;height:7px"></div>
<div class="sb" style="left:1264px;top:750px;width:16px;height:17px"><svg class="a" style="left:0;top:0" width="14" height="15" viewBox="0 0 14 14"><path d="M3 5 L7 9 L11 5" fill="none" stroke="#4d6185" stroke-width="2.2"/></svg></div>
<div class="a" style="left:0;top:765px;width:1280px;height:2px;background:#2a4a7a"></div>
<div class="a" style="left:248px;top:235px;width:783px;height:329px;background:#0a3ec8;border-radius:7px 7px 0 0;overflow:hidden">
<div class="a" style="left:0;top:0;width:100%;height:30px;background:linear-gradient(#1a4aa8 0px,#1a4aa8 1px,#4a94fa 1px,#2a78f2 3px,#0a5ae8 5px,#0054e3 8px,#0054e3 19px,#0a62ee 21px,#0a66ee 28px,#0a3a98 29px,#0a3a98 30px)"></div>
<div class="a" style="left:0;top:29px;width:4px;bottom:0;background:linear-gradient(90deg,#00209a 0px,#00209a 1px,#0846d8 1px,#0a50e8 3px,#0a48e0 4px)"></div>
<div class="a" style="right:0;top:29px;width:4px;bottom:0;background:linear-gradient(90deg,#0036c0 0px,#002ca8 2px,#00269c 3px,#001c88 4px)"></div>
<div class="a" style="left:0;bottom:0;width:100%;height:4px;background:linear-gradient(#0840c8 0px,#0032b4 2px,#002ca8 3px,#001c88 4px)"></div>
<div class="a" style="left:0;bottom:0;width:4px;height:4px;background:linear-gradient(90deg,#00209a 1px,#0838c0 1px)"></div>
</div>
<div class="a" style="left:252px;top:265px;width:776px;height:295px;border:1px solid #c6d8f6"></div>
<div class="a" style="left:254px;top:234px;width:771px;height:1px;background:#d8e6f4"></div>
<svg class="a" style="left:255px;top:243px" width="15" height="15" viewBox="0 0 16 16"><path d="M1 7 L5.5 1.5 L9.5 1 L14 6.5 L13 13.5 L6 15 L1.5 11 Z" fill="#efe6ea" stroke="#0a0a0a" stroke-width="1.3" stroke-linejoin="round"/><path d="M1.6 7 L5.7 2.2 L9.3 1.8 L10.5 3.5 L6.5 8.5 L5 12 L2 10.5 Z" fill="#5f707e"/><path d="M10 3.5 L13.2 6.8 L12.5 8 L9.5 5 Z" fill="#8fbf8f"/><path d="M9.5 9 L9.5 14.5" stroke="#111" stroke-width="1.6"/><circle cx="10.5" cy="1.8" r="0.9" fill="#111"/></svg>
<div class="t" style="left:274px;top:245px;font-size:13px;font-weight:bold;color:#fff">Chart</div>
<div class="a" style="left:958px;top:241px;width:21px;height:21px;border:1px solid #c9d6f6;border-radius:3px;background:linear-gradient(135deg,#7a9bf0,#4f74e6 50%,#3f62d8)"><div class="a" style="left:5px;top:12px;width:7px;height:3px;background:#fff"></div></div>
<div class="a" style="left:981px;top:241px;width:21px;height:21px;border:1px solid #c9d6f6;border-radius:3px;background:linear-gradient(135deg,#7a9bf0,#4f74e6 50%,#3f62d8)"><div class="a" style="left:4px;top:4px;width:11px;height:11px;border:1px solid #fff;border-top-width:3px"></div></div>
<div class="a" style="left:1004px;top:241px;width:21px;height:21px;border:1px solid #fff;border-radius:3px;background:linear-gradient(135deg,#e88868,#d6542e 50%,#c24420)"><svg class="a" style="left:0;top:0" width="19" height="19"><path d="M5 5 L14 14 M14 5 L5 14" stroke="#fff" stroke-width="2.2"/></svg></div>
<div class="a" style="left:253px;top:266px;width:774px;height:293px;background:#ece9d8"></div>
<svg class="a" style="left:0;top:0" width="1280" height="767">
<line x1="322.5" y1="298.5" x2="322.5" y2="526.0" stroke="#7c7c74" stroke-width="1" stroke-dasharray="3,3"/>
<line x1="322.5" y1="527.0" x2="322.5" y2="535.0" stroke="#d8d5c8" stroke-width="1"/>
<line x1="335.5" y1="298.5" x2="335.5" y2="526.0" stroke="#7c7c74" stroke-width="1" stroke-dasharray="3,3"/>
<line x1="335.5" y1="527.0" x2="335.5" y2="535.0" stroke="#d8d5c8" stroke-width="1"/>
<line x1="349.5" y1="298.5" x2="349.5" y2="526.0" stroke="#7c7c74" stroke-width="1" stroke-dasharray="3,3"/>
<line x1="349.5" y1="527.0" x2="349.5" y2="535.0" stroke="#d8d5c8" stroke-width="1"/>
<line x1="362.5" y1="298.5" x2="362.5" y2="526.0" stroke="#7c7c74" stroke-width="1" stroke-dasharray="3,3"/>
<line x1="362.5" y1="527.0" x2="362.5" y2="535.0" stroke="#d8d5c8" stroke-width="1"/>
<line x1="375.5" y1="298.5" x2="375.5" y2="526.0" stroke="#7c7c74" stroke-width="1" stroke-dasharray="3,3"/>
<line x1="375.5" y1="527.0" x2="375.5" y2="535.0" stroke="#d8d5c8" stroke-width="1"/>
<line x1="388.5" y1="298.5" x2="388.5" y2="526.0" stroke="#7c7c74" stroke-width="1" stroke-dasharray="3,3"/>
<line x1="388.5" y1="527.0" x2="388.5" y2="535.0" stroke="#d8d5c8" stroke-width="1"/>
<line x1="401.5" y1="298.5" x2="401.5" y2="526.0" stroke="#7c7c74" stroke-width="1" stroke-dasharray="3,3"/>
<line x1="401.5" y1="527.0" x2="401.5" y2="535.0" stroke="#d8d5c8" stroke-width="1"/>
<line x1="415.5" y1="298.5" x2="415.5" y2="526.0" stroke="#7c7c74" stroke-width="1" stroke-dasharray="3,3"/>
<line x1="415.5" y1="527.0" x2="415.5" y2="535.0" stroke="#d8d5c8" stroke-width="1"/>
<line x1="428.5" y1="298.5" x2="428.5" y2="526.0" stroke="#7c7c74" stroke-width="1" stroke-dasharray="3,3"/>
<line x1="428.5" y1="527.0" x2="428.5" y2="535.0" stroke="#d8d5c8" stroke-width="1"/>
<line x1="441.5" y1="298.5" x2="441.5" y2="526.0" stroke="#7c7c74" stroke-width="1" stroke-dasharray="3,3"/>
<line x1="441.5" y1="527.0" x2="441.5" y2="535.0" stroke="#d8d5c8" stroke-width="1"/>
<line x1="454.5" y1="298.5" x2="454.5" y2="526.0" stroke="#7c7c74" stroke-width="1" stroke-dasharray="3,3"/>
<line x1="454.5" y1="527.0" x2="454.5" y2="535.0" stroke="#d8d5c8" stroke-width="1"/>
<line x1="467.5" y1="298.5" x2="467.5" y2="526.0" stroke="#7c7c74" stroke-width="1" stroke-dasharray="3,3"/>
<line x1="467.5" y1="527.0" x2="467.5" y2="535.0" stroke="#d8d5c8" stroke-width="1"/>
<line x1="481.5" y1="298.5" x2="481.5" y2="526.0" stroke="#7c7c74" stroke-width="1" stroke-dasharray="3,3"/>
<line x1="481.5" y1="527.0" x2="481.5" y2="535.0" stroke="#d8d5c8" stroke-width="1"/>
<line x1="494.5" y1="298.5" x2="494.5" y2="526.0" stroke="#7c7c74" stroke-width="1" stroke-dasharray="3,3"/>
<line x1="494.5" y1="527.0" x2="494.5" y2="535.0" stroke="#d8d5c8" stroke-width="1"/>
<line x1="507.5" y1="298.5" x2="507.5" y2="526.0" stroke="#7c7c74" stroke-width="1" stroke-dasharray="3,3"/>
<line x1="507.5" y1="527.0" x2="507.5" y2="535.0" stroke="#d8d5c8" stroke-width="1"/>
<line x1="520.5" y1="298.5" x2="520.5" y2="526.0" stroke="#7c7c74" stroke-width="1" stroke-dasharray="3,3"/>
<line x1="520.5" y1="527.0" x2="520.5" y2="535.0" stroke="#d8d5c8" stroke-width="1"/>
<line x1="533.5" y1="298.5" x2="533.5" y2="526.0" stroke="#7c7c74" stroke-width="1" stroke-dasharray="3,3"/>
<line x1="533.5" y1="527.0" x2="533.5" y2="535.0" stroke="#d8d5c8" stroke-width="1"/>
<line x1="547.5" y1="298.5" x2="547.5" y2="526.0" stroke="#7c7c74" stroke-width="1" stroke-dasharray="3,3"/>
<line x1="547.5" y1="527.0" x2="547.5" y2="535.0" stroke="#d8d5c8" stroke-width="1"/>
<line x1="560.5" y1="298.5" x2="560.5" y2="526.0" stroke="#7c7c74" stroke-width="1" stroke-dasharray="3,3"/>
<line x1="560.5" y1="527.0" x2="560.5" y2="535.0" stroke="#d8d5c8" stroke-width="1"/>
<line x1="573.5" y1="298.5" x2="573.5" y2="526.0" stroke="#7c7c74" stroke-width="1" stroke-dasharray="3,3"/>
<line x1="573.5" y1="527.0" x2="573.5" y2="535.0" stroke="#d8d5c8" stroke-width="1"/>
<line x1="586.5" y1="298.5" x2="586.5" y2="526.0" stroke="#7c7c74" stroke-width="1" stroke-dasharray="3,3"/>
<line x1="586.5" y1="527.0" x2="586.5" y2="535.0" stroke="#d8d5c8" stroke-width="1"/>
<line x1="599.5" y1="298.5" x2="599.5" y2="526.0" stroke="#7c7c74" stroke-width="1" stroke-dasharray="3,3"/>
<line x1="599.5" y1="527.0" x2="599.5" y2="535.0" stroke="#d8d5c8" stroke-width="1"/>
<line x1="613.5" y1="298.5" x2="613.5" y2="526.0" stroke="#7c7c74" stroke-width="1" stroke-dasharray="3,3"/>
<line x1="613.5" y1="527.0" x2="613.5" y2="535.0" stroke="#d8d5c8" stroke-width="1"/>
<line x1="626.5" y1="298.5" x2="626.5" y2="526.0" stroke="#7c7c74" stroke-width="1" stroke-dasharray="3,3"/>
<line x1="626.5" y1="527.0" x2="626.5" y2="535.0" stroke="#d8d5c8" stroke-width="1"/>
<line x1="639.5" y1="298.5" x2="639.5" y2="526.0" stroke="#7c7c74" stroke-width="1" stroke-dasharray="3,3"/>
<line x1="639.5" y1="527.0" x2="639.5" y2="535.0" stroke="#d8d5c8" stroke-width="1"/>
<line x1="652.5" y1="298.5" x2="652.5" y2="526.0" stroke="#7c7c74" stroke-width="1" stroke-dasharray="3,3"/>
<line x1="652.5" y1="527.0" x2="652.5" y2="535.0" stroke="#d8d5c8" stroke-width="1"/>
<line x1="665.5" y1="298.5" x2="665.5" y2="526.0" stroke="#7c7c74" stroke-width="1" stroke-dasharray="3,3"/>
<line x1="665.5" y1="527.0" x2="665.5" y2="535.0" stroke="#d8d5c8" stroke-width="1"/>
<line x1="679.5" y1="298.5" x2="679.5" y2="526.0" stroke="#7c7c74" stroke-width="1" stroke-dasharray="3,3"/>
<line x1="679.5" y1="527.0" x2="679.5" y2="535.0" stroke="#d8d5c8" stroke-width="1"/>
<line x1="692.5" y1="298.5" x2="692.5" y2="526.0" stroke="#7c7c74" stroke-width="1" stroke-dasharray="3,3"/>
<line x1="692.5" y1="527.0" x2="692.5" y2="535.0" stroke="#d8d5c8" stroke-width="1"/>
<line x1="705.5" y1="298.5" x2="705.5" y2="526.0" stroke="#7c7c74" stroke-width="1" stroke-dasharray="3,3"/>
<line x1="705.5" y1="527.0" x2="705.5" y2="535.0" stroke="#d8d5c8" stroke-width="1"/>
<line x1="718.5" y1="298.5" x2="718.5" y2="526.0" stroke="#7c7c74" stroke-width="1" stroke-dasharray="3,3"/>
<line x1="718.5" y1="527.0" x2="718.5" y2="535.0" stroke="#d8d5c8" stroke-width="1"/>
<line x1="731.5" y1="298.5" x2="731.5" y2="526.0" stroke="#7c7c74" stroke-width="1" stroke-dasharray="3,3"/>
<line x1="731.5" y1="527.0" x2="731.5" y2="535.0" stroke="#d8d5c8" stroke-width="1"/>
<line x1="745.5" y1="298.5" x2="745.5" y2="526.0" stroke="#7c7c74" stroke-width="1" stroke-dasharray="3,3"/>
<line x1="745.5" y1="527.0" x2="745.5" y2="535.0" stroke="#d8d5c8" stroke-width="1"/>
<line x1="758.5" y1="298.5" x2="758.5" y2="526.0" stroke="#7c7c74" stroke-width="1" stroke-dasharray="3,3"/>
<line x1="758.5" y1="527.0" x2="758.5" y2="535.0" stroke="#d8d5c8" stroke-width="1"/>
<line x1="771.5" y1="298.5" x2="771.5" y2="526.0" stroke="#7c7c74" stroke-width="1" stroke-dasharray="3,3"/>
<line x1="771.5" y1="527.0" x2="771.5" y2="535.0" stroke="#d8d5c8" stroke-width="1"/>
<line x1="784.5" y1="298.5" x2="784.5" y2="526.0" stroke="#7c7c74" stroke-width="1" stroke-dasharray="3,3"/>
<line x1="784.5" y1="527.0" x2="784.5" y2="535.0" stroke="#d8d5c8" stroke-width="1"/>
<line x1="797.5" y1="298.5" x2="797.5" y2="526.0" stroke="#7c7c74" stroke-width="1" stroke-dasharray="3,3"/>
<line x1="797.5" y1="527.0" x2="797.5" y2="535.0" stroke="#d8d5c8" stroke-width="1"/>
<line x1="811.5" y1="298.5" x2="811.5" y2="526.0" stroke="#7c7c74" stroke-width="1" stroke-dasharray="3,3"/>
<line x1="811.5" y1="527.0" x2="811.5" y2="535.0" stroke="#d8d5c8" stroke-width="1"/>
<line x1="824.5" y1="298.5" x2="824.5" y2="526.0" stroke="#7c7c74" stroke-width="1" stroke-dasharray="3,3"/>
<line x1="824.5" y1="527.0" x2="824.5" y2="535.0" stroke="#d8d5c8" stroke-width="1"/>
<line x1="837.5" y1="298.5" x2="837.5" y2="526.0" stroke="#7c7c74" stroke-width="1" stroke-dasharray="3,3"/>
<line x1="837.5" y1="527.0" x2="837.5" y2="535.0" stroke="#d8d5c8" stroke-width="1"/>
<line x1="850.5" y1="298.5" x2="850.5" y2="526.0" stroke="#7c7c74" stroke-width="1" stroke-dasharray="3,3"/>
<line x1="850.5" y1="527.0" x2="850.5" y2="535.0" stroke="#d8d5c8" stroke-width="1"/>
<line x1="863.5" y1="298.5" x2="863.5" y2="526.0" stroke="#7c7c74" stroke-width="1" stroke-dasharray="3,3"/>
<line x1="863.5" y1="527.0" x2="863.5" y2="535.0" stroke="#d8d5c8" stroke-width="1"/>
<line x1="877.5" y1="298.5" x2="877.5" y2="526.0" stroke="#7c7c74" stroke-width="1" stroke-dasharray="3,3"/>
<line x1="877.5" y1="527.0" x2="877.5" y2="535.0" stroke="#d8d5c8" stroke-width="1"/>
<line x1="890.5" y1="298.5" x2="890.5" y2="526.0" stroke="#7c7c74" stroke-width="1" stroke-dasharray="3,3"/>
<line x1="890.5" y1="527.0" x2="890.5" y2="535.0" stroke="#d8d5c8" stroke-width="1"/>
<line x1="903.5" y1="298.5" x2="903.5" y2="526.0" stroke="#7c7c74" stroke-width="1" stroke-dasharray="3,3"/>
<line x1="903.5" y1="527.0" x2="903.5" y2="535.0" stroke="#d8d5c8" stroke-width="1"/>
<line x1="916.5" y1="298.5" x2="916.5" y2="526.0" stroke="#7c7c74" stroke-width="1" stroke-dasharray="3,3"/>
<line x1="916.5" y1="527.0" x2="916.5" y2="535.0" stroke="#d8d5c8" stroke-width="1"/>
<line x1="929.5" y1="298.5" x2="929.5" y2="526.0" stroke="#7c7c74" stroke-width="1" stroke-dasharray="3,3"/>
<line x1="929.5" y1="527.0" x2="929.5" y2="535.0" stroke="#d8d5c8" stroke-width="1"/>
<line x1="943.5" y1="298.5" x2="943.5" y2="526.0" stroke="#7c7c74" stroke-width="1" stroke-dasharray="3,3"/>
<line x1="943.5" y1="527.0" x2="943.5" y2="535.0" stroke="#d8d5c8" stroke-width="1"/>
<line x1="956.5" y1="298.5" x2="956.5" y2="526.0" stroke="#7c7c74" stroke-width="1" stroke-dasharray="3,3"/>
<line x1="956.5" y1="527.0" x2="956.5" y2="535.0" stroke="#d8d5c8" stroke-width="1"/>
<line x1="309.4" y1="503.5" x2="969.5" y2="503.5" stroke="#7c7c74" stroke-width="1" stroke-dasharray="3,3"/>
<line x1="309.4" y1="480.5" x2="969.5" y2="480.5" stroke="#7c7c74" stroke-width="1" stroke-dasharray="3,3"/>
<line x1="309.4" y1="457.5" x2="969.5" y2="457.5" stroke="#7c7c74" stroke-width="1" stroke-dasharray="3,3"/>
<line x1="309.4" y1="435.5" x2="969.5" y2="435.5" stroke="#7c7c74" stroke-width="1" stroke-dasharray="3,3"/>
<line x1="309.4" y1="412.5" x2="969.5" y2="412.5" stroke="#7c7c74" stroke-width="1" stroke-dasharray="3,3"/>
<line x1="309.4" y1="389.5" x2="969.5" y2="389.5" stroke="#7c7c74" stroke-width="1" stroke-dasharray="3,3"/>
<line x1="309.4" y1="366.5" x2="969.5" y2="366.5" stroke="#7c7c74" stroke-width="1" stroke-dasharray="3,3"/>
<line x1="309.4" y1="344.5" x2="969.5" y2="344.5" stroke="#7c7c74" stroke-width="1" stroke-dasharray="3,3"/>
<line x1="309.4" y1="321.5" x2="969.5" y2="321.5" stroke="#7c7c74" stroke-width="1" stroke-dasharray="3,3"/>
<line x1="309.4" y1="298.5" x2="969.5" y2="298.5" stroke="#7c7c74" stroke-width="1" stroke-dasharray="3,3"/>
<line x1="309.4" y1="526.5" x2="969.5" y2="526.5" stroke="#d0cdc0" stroke-width="1"/>
<rect x="391" y="517" width="8" height="9" fill="#f00000"/>
<rect x="444" y="428" width="8" height="98" fill="#f00000"/>
<rect x="457" y="379" width="8" height="147" fill="#f00000"/>
<rect x="470" y="485" width="8" height="41" fill="#f00000"/>
<rect x="484" y="351" width="8" height="175" fill="#f00000"/>
<rect x="497" y="427" width="8" height="99" fill="#f00000"/>
<rect x="510" y="319" width="8" height="207" fill="#f00000"/>
<rect x="523" y="334" width="8" height="192" fill="#f00000"/>
<rect x="536" y="377" width="8" height="149" fill="#f00000"/>
<rect x="550" y="339" width="8" height="187" fill="#f00000"/>
<rect x="563" y="464" width="8" height="62" fill="#f00000"/>
<rect x="576" y="391" width="8" height="135" fill="#f00000"/>
<rect x="589" y="376" width="8" height="150" fill="#f00000"/>
<rect x="602" y="355" width="8" height="171" fill="#f00000"/>
<rect x="616" y="370" width="8" height="156" fill="#f00000"/>
<rect x="629" y="382" width="8" height="144" fill="#f00000"/>
<rect x="642" y="384" width="8" height="142" fill="#f00000"/>
<rect x="655" y="363" width="8" height="163" fill="#f00000"/>
<rect x="668" y="391" width="8" height="135" fill="#f00000"/>
<rect x="682" y="381" width="8" height="145" fill="#f00000"/>
<rect x="695" y="411" width="8" height="115" fill="#f00000"/>
<rect x="708" y="497" width="8" height="29" fill="#f00000"/>
<rect x="721" y="510" width="8" height="16" fill="#f00000"/>
<rect x="734" y="515" width="8" height="11" fill="#f00000"/>
<rect x="748" y="383" width="8" height="143" fill="#f00000"/>
<rect x="761" y="374" width="8" height="152" fill="#f00000"/>
<rect x="774" y="377" width="8" height="149" fill="#f00000"/>
<rect x="787" y="490" width="8" height="36" fill="#f00000"/>
<rect x="800" y="439" width="8" height="87" fill="#f00000"/>
<rect x="814" y="351" width="8" height="175" fill="#f00000"/>
<rect x="827" y="373" width="8" height="153" fill="#f00000"/>
<rect x="840" y="361" width="8" height="165" fill="#f00000"/>
<rect x="853" y="399" width="8" height="127" fill="#f00000"/>
<rect x="866" y="408" width="8" height="118" fill="#f00000"/>
<rect x="880" y="355" width="8" height="171" fill="#f00000"/>
<rect x="893" y="376" width="8" height="150" fill="#f00000"/>
<rect x="906" y="500" width="8" height="26" fill="#f00000"/>
<rect x="919" y="405" width="8" height="121" fill="#f00000"/>
<rect x="932" y="468" width="8" height="58" fill="#f00000"/>
<rect x="946" y="499" width="8" height="27" fill="#f00000"/>
<rect x="959" y="507" width="8" height="19" fill="#f00000"/>
<line x1="309.5" y1="298" x2="309.5" y2="527" stroke="#000" stroke-width="1.2"/>
<line x1="969.5" y1="298" x2="969.5" y2="527" stroke="#000" stroke-width="1.2"/>
<line x1="305" y1="526.5" x2="310" y2="526.5" stroke="#000" stroke-width="1.2"/>
<line x1="969" y1="526.5" x2="974" y2="526.5" stroke="#000" stroke-width="1.2"/>
<text x="298.4" y="529.5" text-anchor="end" font-family="Liberation Sans" font-size="12" fill="#222">0</text>
<text x="980.5" y="529.5" text-anchor="start" font-family="Liberation Sans" font-size="12" fill="#222">0</text>
<line x1="305" y1="503.5" x2="314" y2="503.5" stroke="#000" stroke-width="1.2"/>
<line x1="966" y1="503.5" x2="974" y2="503.5" stroke="#000" stroke-width="1.2"/>
<text x="298.4" y="506.5" text-anchor="end" font-family="Liberation Sans" font-size="12" fill="#222">31</text>
<text x="980.5" y="506.5" text-anchor="start" font-family="Liberation Sans" font-size="12" fill="#222">31</text>
<line x1="305" y1="480.5" x2="314" y2="480.5" stroke="#000" stroke-width="1.2"/>
<line x1="966" y1="480.5" x2="974" y2="480.5" stroke="#000" stroke-width="1.2"/>
<text x="298.4" y="483.5" text-anchor="end" font-family="Liberation Sans" font-size="12" fill="#222">62</text>
<text x="980.5" y="483.5" text-anchor="start" font-family="Liberation Sans" font-size="12" fill="#222">62</text>
<line x1="305" y1="457.5" x2="314" y2="457.5" stroke="#000" stroke-width="1.2"/>
<line x1="966" y1="457.5" x2="974" y2="457.5" stroke="#000" stroke-width="1.2"/>
<text x="298.4" y="460.5" text-anchor="end" font-family="Liberation Sans" font-size="12" fill="#222">93</text>
<text x="980.5" y="460.5" text-anchor="start" font-family="Liberation Sans" font-size="12" fill="#222">93</text>
<line x1="305" y1="435.5" x2="314" y2="435.5" stroke="#000" stroke-width="1.2"/>
<line x1="966" y1="435.5" x2="974" y2="435.5" stroke="#000" stroke-width="1.2"/>
<text x="298.4" y="438.5" text-anchor="end" font-family="Liberation Sans" font-size="12" fill="#222">124</text>
<text x="980.5" y="438.5" text-anchor="start" font-family="Liberation Sans" font-size="12" fill="#222">124</text>
<line x1="305" y1="412.5" x2="314" y2="412.5" stroke="#000" stroke-width="1.2"/>
<line x1="966" y1="412.5" x2="974" y2="412.5" stroke="#000" stroke-width="1.2"/>
<text x="298.4" y="415.5" text-anchor="end" font-family="Liberation Sans" font-size="12" fill="#222">155</text>
<text x="980.5" y="415.5" text-anchor="start" font-family="Liberation Sans" font-size="12" fill="#222">155</text>
<line x1="305" y1="389.5" x2="314" y2="389.5" stroke="#000" stroke-width="1.2"/>
<line x1="966" y1="389.5" x2="974" y2="389.5" stroke="#000" stroke-width="1.2"/>
<text x="298.4" y="392.5" text-anchor="end" font-family="Liberation Sans" font-size="12" fill="#222">186</text>
<text x="980.5" y="392.5" text-anchor="start" font-family="Liberation Sans" font-size="12" fill="#222">186</text>
<line x1="305" y1="366.5" x2="314" y2="366.5" stroke="#000" stroke-width="1.2"/>
<line x1="966" y1="366.5" x2="974" y2="366.5" stroke="#000" stroke-width="1.2"/>
<text x="298.4" y="369.5" text-anchor="end" font-family="Liberation Sans" font-size="12" fill="#222">217</text>
<text x="980.5" y="369.5" text-anchor="start" font-family="Liberation Sans" font-size="12" fill="#222">217</text>
<line x1="305" y1="344.5" x2="314" y2="344.5" stroke="#000" stroke-width="1.2"/>
<line x1="966" y1="344.5" x2="974" y2="344.5" stroke="#000" stroke-width="1.2"/>
<text x="298.4" y="347.5" text-anchor="end" font-family="Liberation Sans" font-size="12" fill="#222">248</text>
<text x="980.5" y="347.5" text-anchor="start" font-family="Liberation Sans" font-size="12" fill="#222">248</text>
<line x1="305" y1="321.5" x2="314" y2="321.5" stroke="#000" stroke-width="1.2"/>
<line x1="966" y1="321.5" x2="974" y2="321.5" stroke="#000" stroke-width="1.2"/>
<text x="298.4" y="324.5" text-anchor="end" font-family="Liberation Sans" font-size="12" fill="#222">279</text>
<text x="980.5" y="324.5" text-anchor="start" font-family="Liberation Sans" font-size="12" fill="#222">279</text>
<line x1="305" y1="298.5" x2="314" y2="298.5" stroke="#000" stroke-width="1.2"/>
<line x1="966" y1="298.5" x2="974" y2="298.5" stroke="#000" stroke-width="1.2"/>
<text x="298.4" y="301.5" text-anchor="end" font-family="Liberation Sans" font-size="12" fill="#222">310</text>
<text x="980.5" y="301.5" text-anchor="start" font-family="Liberation Sans" font-size="12" fill="#222">310</text>
<text x="639" y="287" text-anchor="middle" font-family="Liberation Sans" font-size="16" fill="#a9a79d">Max Charge Power(W)</text>
</svg>
</body></html>
